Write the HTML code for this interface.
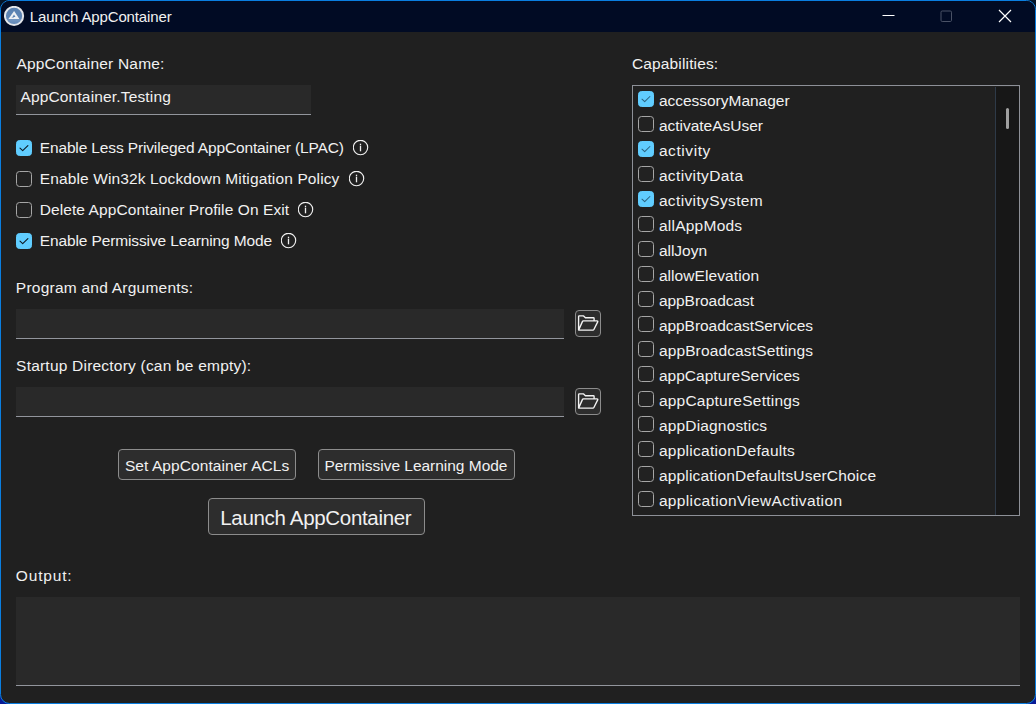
<!DOCTYPE html>
<html lang="en"><head><meta charset="utf-8"><title>Launch AppContainer</title>
<style>
html,body{margin:0;padding:0;}
body{width:1036px;height:704px;overflow:hidden;background:linear-gradient(180deg,#061426 0%,#061426 50%,#081a96 50%,#081a96 100%);font-family:"Liberation Sans",sans-serif;font-size:15px;color:#f2f2f2;position:relative;}
#win{position:absolute;left:0;top:0;width:1034px;height:702px;border:1px solid #0a7ee0;border-radius:9.5px;background:#202020;overflow:hidden;}
#tb{position:absolute;left:0;top:0;width:1034px;height:31px;background:#010b24;}
.t{position:absolute;white-space:nowrap;color:#f1f1f1;}
.cb{position:absolute;width:14px;height:14px;border:1px solid #a6a6a6;border-radius:3.5px;background:#222;}
.cb.on{background:#60cdff;border-color:#60cdff;}
.cb svg{position:absolute;left:-1px;top:-1px;}
.tbx{position:absolute;background:#292929;border-bottom:1px solid #92959c;}
.btn{position:absolute;background:#2d2d2d;border:1px solid #8c8c8c;border-radius:4px;box-sizing:border-box;}
.ico{position:absolute;width:16px;height:16px;}
#list{position:absolute;left:631px;top:84px;width:386px;height:429px;border:1px solid #8d9097;background:#202020;overflow:hidden;}
#track{position:absolute;left:362px;top:1px;width:24px;height:428px;background:#171717;border-left:1px solid #2e3a48;}
#thumb{position:absolute;left:1005px;top:107px;width:3px;height:21px;border-radius:1.5px;background:#a0a0a0;}
</style></head><body>
<div id="win">
<div id="tb"></div>

<svg style="position:absolute;left:3px;top:5px" width="21" height="21" viewBox="0 0 21 21"><defs><linearGradient id="ig" x1="0" y1="0" x2="0" y2="1"><stop offset="0" stop-color="#587fb0"/><stop offset="0.66" stop-color="#5f86b6"/><stop offset="0.7" stop-color="#7296c2"/><stop offset="1" stop-color="#5d84b4"/></linearGradient></defs><circle cx="10.05" cy="9.95" r="9.1" fill="url(#ig)" stroke="#e2e5ea" stroke-width="2"/><path d="M10.1 5.1 L15.4 13.1 H4.4 Z" fill="#eef0f4"/><path d="M10 8.5 L11.5 10.9 H8.4 Z M7.9 11.5 H9.9 V12 H7.6 Z" fill="#5b82b3"/></svg>
<div class="t title" style="left:28.84px;top:6.10px;font-size:15px;line-height:20px;letter-spacing:-0.137px">Launch AppContainer</div>
<svg style="position:absolute;left:870px;top:0" width="164" height="31" viewBox="0 0 164 31"><path d="M11.5 14.5 H23.5" stroke="#fff" stroke-width="1"/><rect x="70" y="10" width="10.5" height="10.5" rx="1.2" fill="none" stroke="#4a5266" stroke-width="1"/><path d="M128 9 L140 21 M140 9 L128 21" stroke="#fff" stroke-width="1.2"/></svg>
<div class="t " style="left:15.45px;top:53.18px;font-size:15.5px;line-height:20px;letter-spacing:0.186px">AppContainer Name:</div>
<div class="tbx" style="left:15px;top:84px;width:295px;height:29px"></div>
<div class="t " style="left:19.45px;top:86.43px;font-size:15.5px;line-height:20px;letter-spacing:0.158px">AppContainer.Testing</div>
<div class="cb on" style="left:15px;top:139px"><svg viewBox="0 0 16 16" width="16" height="16"><path d="M4.0 8.2 L6.7 10.7 L11.9 5.6" fill="none" stroke="#0c1a24" stroke-width="1.1" stroke-linecap="round" stroke-linejoin="round"/></svg></div>
<div class="t " style="left:38.73px;top:136.93px;font-size:15.5px;line-height:20px;letter-spacing:-0.136px">Enable Less Privileged AppContainer (LPAC)</div>
<div class="ico" style="left:352px;top:139px"><svg viewBox="0 0 16 16" width="16" height="16"><circle cx="7.5" cy="7.5" r="7.2" fill="none" stroke="#f0f0f0" stroke-width="1.15"/><rect x="6.85" y="3.7" width="1.3" height="1.3" fill="#f0f0f0"/><rect x="6.85" y="5.6" width="1.3" height="5.7" fill="#f0f0f0"/></svg></div>
<div class="cb" style="left:15px;top:170px"></div>
<div class="t " style="left:38.73px;top:167.93px;font-size:15.5px;line-height:20px;letter-spacing:0.128px">Enable Win32k Lockdown Mitigation Policy</div>
<div class="ico" style="left:348px;top:170px"><svg viewBox="0 0 16 16" width="16" height="16"><circle cx="7.5" cy="7.5" r="7.2" fill="none" stroke="#f0f0f0" stroke-width="1.15"/><rect x="6.85" y="3.7" width="1.3" height="1.3" fill="#f0f0f0"/><rect x="6.85" y="5.6" width="1.3" height="5.7" fill="#f0f0f0"/></svg></div>
<div class="cb" style="left:15px;top:201px"></div>
<div class="t " style="left:38.73px;top:198.93px;font-size:15.5px;line-height:20px;letter-spacing:0.087px">Delete AppContainer Profile On Exit</div>
<div class="ico" style="left:297px;top:201px"><svg viewBox="0 0 16 16" width="16" height="16"><circle cx="7.5" cy="7.5" r="7.2" fill="none" stroke="#f0f0f0" stroke-width="1.15"/><rect x="6.85" y="3.7" width="1.3" height="1.3" fill="#f0f0f0"/><rect x="6.85" y="5.6" width="1.3" height="5.7" fill="#f0f0f0"/></svg></div>
<div class="cb on" style="left:15px;top:232px"><svg viewBox="0 0 16 16" width="16" height="16"><path d="M4.0 8.2 L6.7 10.7 L11.9 5.6" fill="none" stroke="#0c1a24" stroke-width="1.1" stroke-linecap="round" stroke-linejoin="round"/></svg></div>
<div class="t " style="left:38.73px;top:229.93px;font-size:15.5px;line-height:20px;letter-spacing:-0.119px">Enable Permissive Learning Mode</div>
<div class="ico" style="left:280px;top:232px"><svg viewBox="0 0 16 16" width="16" height="16"><circle cx="7.5" cy="7.5" r="7.2" fill="none" stroke="#f0f0f0" stroke-width="1.15"/><rect x="6.85" y="3.7" width="1.3" height="1.3" fill="#f0f0f0"/><rect x="6.85" y="5.6" width="1.3" height="5.7" fill="#f0f0f0"/></svg></div>
<div class="t " style="left:14.87px;top:277.43px;font-size:15.5px;line-height:20px;letter-spacing:0.234px">Program and Arguments:</div>
<div class="tbx" style="left:15px;top:308px;width:548px;height:29px"></div>
<div class="btn" style="left:574px;top:309px;width:26px;height:27px"><div style="position:absolute;left:-1px;top:-1px"><svg viewBox="0 0 26 27" width="26" height="27"><path d="M3.6 20.1 V6.6 Q3.6 5.9 4.3 5.9 H8.6 L10.4 7.7 H18.4 Q19.1 7.7 19.1 8.4 V10.8 M3.6 20.1 L7.4 11.6 Q7.7 10.9 8.4 10.9 H22 Q23.1 10.9 22.7 11.9 L18.9 19.5 Q18.6 20.1 17.9 20.1 Z" fill="none" stroke="#f4f4f4" stroke-width="1.35" stroke-linejoin="round" stroke-linecap="round"/></svg></div></div>
<div class="t " style="left:15.08px;top:355.18px;font-size:15.5px;line-height:20px;letter-spacing:0.213px">Startup Directory (can be empty):</div>
<div class="tbx" style="left:15px;top:386px;width:548px;height:29px"></div>
<div class="btn" style="left:574px;top:387px;width:26px;height:27px"><div style="position:absolute;left:-1px;top:-1px"><svg viewBox="0 0 26 27" width="26" height="27"><path d="M3.6 20.1 V6.6 Q3.6 5.9 4.3 5.9 H8.6 L10.4 7.7 H18.4 Q19.1 7.7 19.1 8.4 V10.8 M3.6 20.1 L7.4 11.6 Q7.7 10.9 8.4 10.9 H22 Q23.1 10.9 22.7 11.9 L18.9 19.5 Q18.6 20.1 17.9 20.1 Z" fill="none" stroke="#f4f4f4" stroke-width="1.35" stroke-linejoin="round" stroke-linecap="round"/></svg></div></div>
<div class="btn" style="left:117px;top:448px;width:178px;height:31px"></div>
<div class="t " style="left:123.96px;top:454.93px;font-size:15.5px;line-height:20px;letter-spacing:0.072px">Set AppContainer ACLs</div>
<div class="btn" style="left:317px;top:448px;width:197px;height:31px"></div>
<div class="t " style="left:323.42px;top:454.93px;font-size:15.5px;line-height:20px;letter-spacing:-0.020px">Permissive Learning Mode</div>
<div class="btn" style="left:207px;top:497px;width:217px;height:37px"></div>
<div class="t big" style="left:219.24px;top:504.45px;font-size:20.5px;line-height:26px;letter-spacing:-0.319px">Launch AppContainer</div>
<div class="t " style="left:14.85px;top:564.93px;font-size:15.5px;line-height:20px;letter-spacing:0.824px">Output:</div>
<div class="tbx" style="left:15px;top:596px;width:1004px;height:88px"></div>
<div class="t " style="left:630.95px;top:53.18px;font-size:15.5px;line-height:20px;letter-spacing:0.150px">Capabilities:</div>
<div id="list"><div id="track"></div></div>
<div class="cb on" style="left:637px;top:90px"><svg viewBox="0 0 16 16" width="16" height="16"><path d="M4.0 8.2 L6.7 10.6 L11.9 5.5" fill="none" stroke="#2a6380" stroke-width="1.05" stroke-linecap="round" stroke-linejoin="round"/></svg></div>
<div class="t " style="left:657.89px;top:90.23px;font-size:15.5px;line-height:20px;letter-spacing:-0.018px">accessoryManager</div>
<div class="cb" style="left:637px;top:115px"></div>
<div class="t " style="left:657.89px;top:115.23px;font-size:15.5px;line-height:20px;letter-spacing:-0.007px">activateAsUser</div>
<div class="cb on" style="left:637px;top:140px"><svg viewBox="0 0 16 16" width="16" height="16"><path d="M4.0 8.2 L6.7 10.6 L11.9 5.5" fill="none" stroke="#2a6380" stroke-width="1.05" stroke-linecap="round" stroke-linejoin="round"/></svg></div>
<div class="t " style="left:657.89px;top:140.23px;font-size:15.5px;line-height:20px;letter-spacing:0.589px">activity</div>
<div class="cb" style="left:637px;top:165px"></div>
<div class="t " style="left:657.89px;top:165.23px;font-size:15.5px;line-height:20px;letter-spacing:0.369px">activityData</div>
<div class="cb on" style="left:637px;top:190px"><svg viewBox="0 0 16 16" width="16" height="16"><path d="M4.0 8.2 L6.7 10.6 L11.9 5.5" fill="none" stroke="#2a6380" stroke-width="1.05" stroke-linecap="round" stroke-linejoin="round"/></svg></div>
<div class="t " style="left:657.89px;top:190.23px;font-size:15.5px;line-height:20px;letter-spacing:0.373px">activitySystem</div>
<div class="cb" style="left:637px;top:215px"></div>
<div class="t " style="left:657.89px;top:215.23px;font-size:15.5px;line-height:20px;letter-spacing:0.251px">allAppMods</div>
<div class="cb" style="left:637px;top:240px"></div>
<div class="t " style="left:657.89px;top:240.23px;font-size:15.5px;line-height:20px;letter-spacing:-0.019px">allJoyn</div>
<div class="cb" style="left:637px;top:265px"></div>
<div class="t " style="left:657.89px;top:265.23px;font-size:15.5px;line-height:20px;letter-spacing:0.080px">allowElevation</div>
<div class="cb" style="left:637px;top:290px"></div>
<div class="t " style="left:657.89px;top:290.23px;font-size:15.5px;line-height:20px;letter-spacing:-0.042px">appBroadcast</div>
<div class="cb" style="left:637px;top:315px"></div>
<div class="t " style="left:657.89px;top:315.23px;font-size:15.5px;line-height:20px;letter-spacing:-0.044px">appBroadcastServices</div>
<div class="cb" style="left:637px;top:340px"></div>
<div class="t " style="left:657.89px;top:340.23px;font-size:15.5px;line-height:20px;letter-spacing:0.136px">appBroadcastSettings</div>
<div class="cb" style="left:637px;top:365px"></div>
<div class="t " style="left:657.89px;top:365.23px;font-size:15.5px;line-height:20px;letter-spacing:0.031px">appCaptureServices</div>
<div class="cb" style="left:637px;top:390px"></div>
<div class="t " style="left:657.89px;top:390.23px;font-size:15.5px;line-height:20px;letter-spacing:0.233px">appCaptureSettings</div>
<div class="cb" style="left:637px;top:415px"></div>
<div class="t " style="left:657.89px;top:415.23px;font-size:15.5px;line-height:20px;letter-spacing:0.174px">appDiagnostics</div>
<div class="cb" style="left:637px;top:440px"></div>
<div class="t " style="left:657.89px;top:440.23px;font-size:15.5px;line-height:20px;letter-spacing:0.277px">applicationDefaults</div>
<div class="cb" style="left:637px;top:465px"></div>
<div class="t " style="left:657.89px;top:465.23px;font-size:15.5px;line-height:20px;letter-spacing:0.185px">applicationDefaultsUserChoice</div>
<div class="cb" style="left:637px;top:490px"></div>
<div class="t " style="left:657.89px;top:490.23px;font-size:15.5px;line-height:20px;letter-spacing:0.354px">applicationViewActivation</div>
<div id="thumb"></div>
</div></body></html>
